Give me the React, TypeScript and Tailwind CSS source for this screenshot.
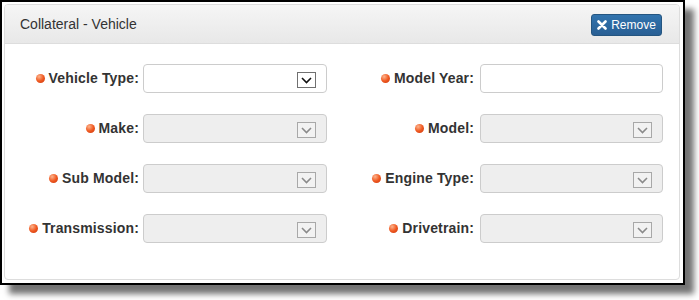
import React from 'react';

type Field = { label: string; kind: 'select' | 'text'; disabled?: boolean };

const rows: [Field, Field][] = [
  [
    { label: 'Vehicle Type:', kind: 'select' },
    { label: 'Model Year:', kind: 'text' },
  ],
  [
    { label: 'Make:', kind: 'select', disabled: true },
    { label: 'Model:', kind: 'select', disabled: true },
  ],
  [
    { label: 'Sub Model:', kind: 'select', disabled: true },
    { label: 'Engine Type:', kind: 'select', disabled: true },
  ],
  [
    { label: 'Transmission:', kind: 'select', disabled: true },
    { label: 'Drivetrain:', kind: 'select', disabled: true },
  ],
];

const Dot = () => (
  <span className="inline-block w-[9px] h-[9px] rounded-full mr-[4px] shrink-0 bg-[radial-gradient(circle_at_35%_30%,#fcb38c_0%,#f05a22_50%,#c9340a_100%)]" />
);

const Label = ({ text, width }: { text: string; width: string }) => (
  <div className={`${width} flex items-center justify-end`}>
    <Dot />
    <span className="text-[14px] font-bold text-[#333] tracking-[0.15px]">{text}</span>
  </div>
);

const Control = ({ field, width }: { field: Field; width: string }) => {
  const bg = field.disabled ? 'bg-[#eee]' : 'bg-white';
  return (
    <div className={`${width} h-[29px] border border-[#ccc] rounded-[4px] ${bg} flex items-center justify-end pr-[10px]`}>
      {field.kind === 'select' && (
        <div
          className={`w-[19px] h-[16px] mt-[3px] border flex items-center justify-center ${
            field.disabled ? 'border-[#a8a8a8] bg-[#f2f2f2]' : 'border-[#707070] bg-white'
          }`}
        >
          <svg width="11" height="7" viewBox="0 0 11 7">
            <polyline
              points="1,1 5.5,5.5 10,1"
              fill="none"
              stroke={field.disabled ? '#8a8a8a' : '#111'}
              strokeWidth="1.6"
            />
          </svg>
        </div>
      )}
    </div>
  );
};

export default function App() {
  return (
    <div className="w-[699px] h-[300px] bg-white font-['Liberation_Sans',Arial,sans-serif]">
      <div className="w-[685px] h-[285px] border-2 border-black bg-white pt-[2px] pl-[2px] pr-[3px] pb-[3px] shadow-[9px_9px_6px_rgba(0,0,0,0.55)]">
        <div className="h-full border border-[#ddd] rounded-[4px] overflow-hidden">
          <div className="h-[39px] border-b border-[#ddd] bg-[linear-gradient(#f5f5f5,#e8e8e8)] flex items-center justify-between pl-[15px] pr-[17px]">
            <span className="text-[14px] text-[#333]">Collateral - Vehicle</span>
            <button className="h-[22px] w-[71px] justify-center rounded-[3px] border border-[#245580] bg-[linear-gradient(#3173ad,#295f94)] text-white text-[12px] flex items-center gap-[4px] mt-[1px]">
              <svg width="10" height="10" viewBox="0 0 10 10">
                <path d="M1.5 1.5 L8.5 8.5 M8.5 1.5 L1.5 8.5" stroke="#fff" strokeWidth="2.6" strokeLinecap="round" />
              </svg>
              <span>Remove</span>
            </button>
          </div>
          <div className="pt-[20px] flex flex-col gap-[21px]">
            {rows.map(([a, b]) => (
              <div key={a.label} className="flex items-center">
                <Label text={a.label} width="w-[138px] pr-[4px]" />
                <Control field={a} width="w-[184px]" />
                <Label text={b.label} width="w-[153px] pr-[6px]" />
                <Control field={b} width="w-[183px]" />
              </div>
            ))}
          </div>
        </div>
      </div>
    </div>
  );
}
